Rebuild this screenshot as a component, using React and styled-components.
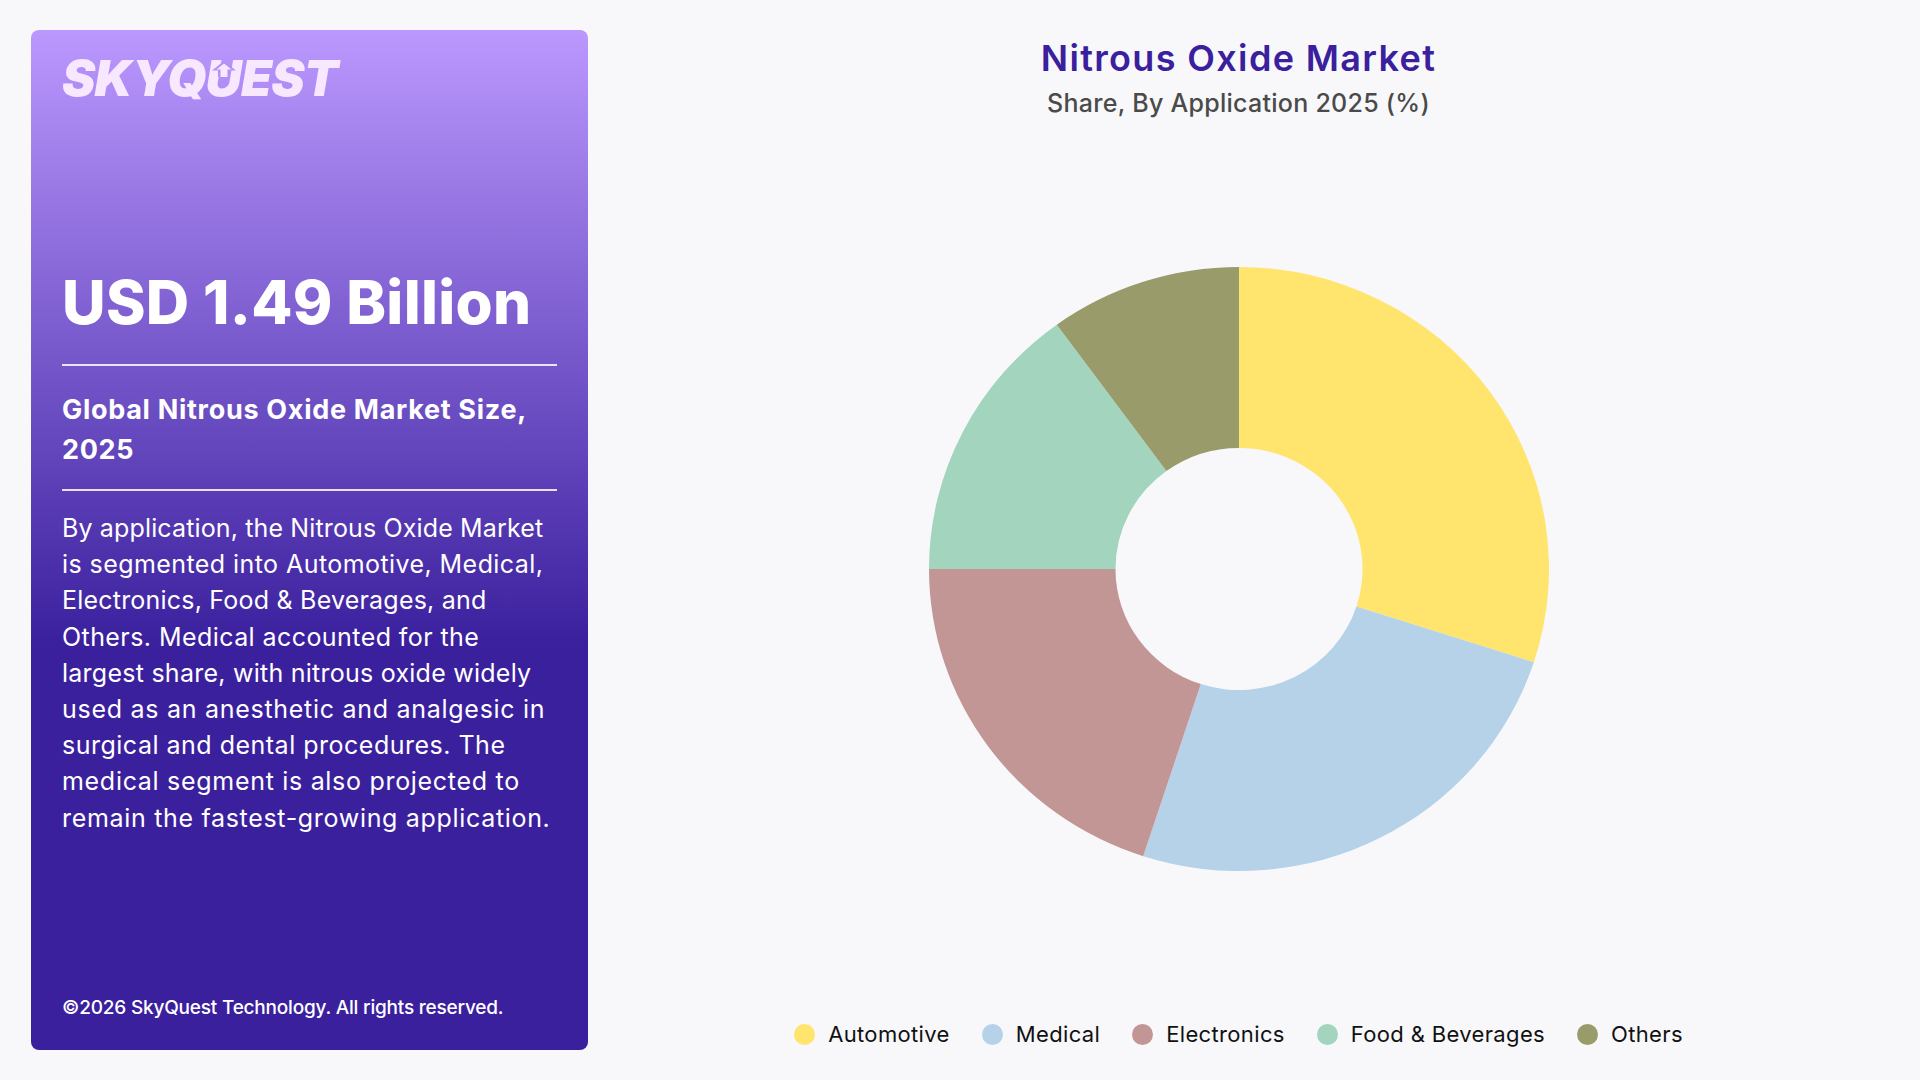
import React from 'react';
import styled, { createGlobalStyle } from 'styled-components';

const GlobalStyle = createGlobalStyle`
  html, body {
    margin: 0;
    padding: 0;
    background: #f8f8fb;
  }
`;

const Page = styled.div`
  width: 1920px;
  height: 1080px;
  box-sizing: border-box;
  padding: 30px 31px 30px 31px;
  display: flex;
  background: #f8f8fb;
  font-family: Inter, "Liberation Sans", sans-serif;
  overflow: hidden;
`;

const Card = styled.aside`
  width: 557px;
  flex-shrink: 0;
  box-sizing: border-box;
  padding: 29px 31px 28px;
  display: flex;
  flex-direction: column;
  border-radius: 8px;
  color: #fff;
  background: linear-gradient(180deg, #bb98fe 0%, #3b209e 60%, #3b209e 100%);
`;

const Logo = styled.div`
  position: relative;
  height: 39px;
  width: 278px;
  font-size: 50px;
  line-height: 39px;
  font-weight: 900;
  font-style: italic;
  letter-spacing: -0.7px;
  color: #f7e8ff;
  white-space: nowrap;
`;

const LogoArrow = styled.svg`
  position: absolute;
  left: 150px;
  top: 2px;
`;

const Amount = styled.div`
  margin-top: 166px;
  font-size: 60px;
  line-height: 76px;
  font-weight: 800;
  letter-spacing: 0.3px;
  white-space: nowrap;
`;

const Divider = styled.div`
  height: 2px;
  background: rgba(255, 255, 255, 0.85);
  margin-top: ${props => props.top}px;
`;

const Heading = styled.div`
  margin-top: 24px;
  font-size: 27px;
  line-height: 40px;
  font-weight: 700;
  letter-spacing: 0.7px;
`;

const Description = styled.p`
  margin: 19px 0 0;
  font-size: 25px;
  line-height: 36.2px;
  font-weight: 400;
`;

const DescriptionLine = styled.span`
  display: block;
  white-space: nowrap;
  letter-spacing: ${props => props.spread}px;
`;

const Copyright = styled.div`
  margin-top: auto;
  font-size: 19px;
  line-height: 28px;
  font-weight: 500;
  letter-spacing: -0.2px;
  white-space: nowrap;
`;

const ChartColumn = styled.main`
  flex: 1;
  display: flex;
  flex-direction: column;
  align-items: center;
`;

const Title = styled.h1`
  margin: 6px 0 0;
  font-size: 36px;
  line-height: 44px;
  font-weight: 600;
  letter-spacing: 1.35px;
  color: #3b209e;
`;

const Subtitle = styled.h2`
  margin: 6px 0 0;
  font-size: 25px;
  line-height: 34px;
  font-weight: 500;
  letter-spacing: 0.27px;
  color: #4a4a4a;
`;

const Donut = styled.svg`
  margin-top: 147px;
  display: block;
`;

const Legend = styled.div`
  margin-top: auto;
  margin-bottom: 1px;
  height: 30px;
  display: flex;
  align-items: center;
  gap: 32px;
`;

const LegendItem = styled.div`
  display: flex;
  align-items: center;
  gap: 13px;
  font-size: 22px;
  letter-spacing: 0.35px;
  color: #111;
`;

const Dot = styled.span`
  width: 21px;
  height: 21px;
  border-radius: 50%;
  background: ${props => props.color};
`;

const segments = [
  { label: 'Automotive', value: 30, color: '#ffe46e' },
  { label: 'Medical', value: 25, color: '#b6d2e8' },
  { label: 'Electronics', value: 20, color: '#c39696' },
  { label: 'Food & Beverages', value: 15, color: '#a2d4be' },
  { label: 'Others', value: 10, color: '#9a9b6b' },
];

// line breaks follow the picture, spread evens out each line's width
const descriptionLines = [
  { text: 'By application, the Nitrous Oxide Market', spread: 0.14 },
  { text: 'is segmented into Automotive, Medical,', spread: 0.43 },
  { text: 'Electronics, Food & Beverages, and', spread: 0.21 },
  { text: 'Others. Medical accounted for the', spread: 0.43 },
  { text: 'largest share, with nitrous oxide widely', spread: 0.25 },
  { text: 'used as an anesthetic and analgesic in', spread: 0.72 },
  { text: 'surgical and dental procedures. The', spread: 0.5 },
  { text: 'medical segment is also projected to', spread: 0.7 },
  { text: 'remain the fastest-growing application.', spread: 0.68 },
];

// the chart in the picture is slightly squashed, so radii differ per axis
const CX = 310;
const CY = 302;
const OUTER = [310, 302];
const INNER = [123.5, 121];

const point = (radii, pct) => {
  const a = (pct / 100) * Math.PI * 2;
  return [CX + radii[0] * Math.sin(a), CY - radii[1] * Math.cos(a)];
};

const slicePath = (from, to) => {
  const large = to - from > 50 ? 1 : 0;
  const [x1, y1] = point(OUTER, from);
  const [x2, y2] = point(OUTER, to);
  const [x3, y3] = point(INNER, to);
  const [x4, y4] = point(INNER, from);
  return `M${x1} ${y1}A${OUTER[0]} ${OUTER[1]} 0 ${large} 1 ${x2} ${y2}L${x3} ${y3}A${INNER[0]} ${INNER[1]} 0 ${large} 0 ${x4} ${y4}Z`;
};

const DonutChart = () => {
  let start = 0;
  return (
    <Donut width="620" height="604" viewBox="0 0 620 604">
      {segments.map(s => {
        const d = slicePath(start, start + s.value);
        start += s.value;
        return <path key={s.label} d={d} fill={s.color} />;
      })}
    </Donut>
  );
};

const App = () => (
  <Page>
    <GlobalStyle />
    <Card>
      <Logo>
        SKYQUEST
        <LogoArrow width="24" height="16" viewBox="0 0 24 16">
          <path d="M12 0 L24 9.5 H18 V16 H6 V9.5 H0 Z" fill="#b491f6" />
          <path d="M12 2.5 L19.5 8.5 H15.5 V16 H8.5 V8.5 H4.5 Z" fill="#f7e8ff" />
        </LogoArrow>
      </Logo>
      <Amount>USD 1.49 Billion</Amount>
      <Divider top={24} />
      <Heading>Global Nitrous Oxide Market Size, 2025</Heading>
      <Divider top={19} />
      <Description>
        {descriptionLines.map(line => (
          <DescriptionLine key={line.text} spread={line.spread}>{line.text}</DescriptionLine>
        ))}
      </Description>
      <Copyright>©2026 SkyQuest Technology. All rights reserved.</Copyright>
    </Card>
    <ChartColumn>
      <Title>Nitrous Oxide Market</Title>
      <Subtitle>Share, By Application 2025 (%)</Subtitle>
      <DonutChart />
      <Legend>
        {segments.map(s => (
          <LegendItem key={s.label}>
            <Dot color={s.color} />
            {s.label}
          </LegendItem>
        ))}
      </Legend>
    </ChartColumn>
  </Page>
);

export default App;
